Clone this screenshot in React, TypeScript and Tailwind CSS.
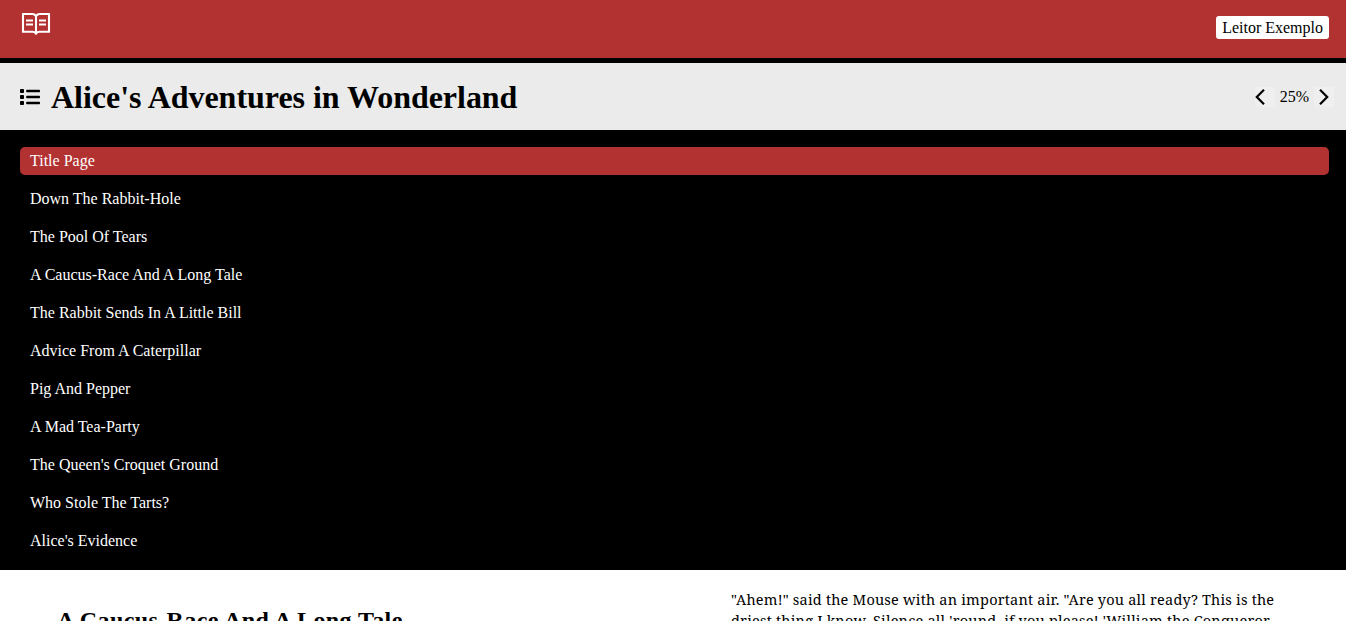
const chapters = [
  "Title Page",
  "Down The Rabbit-Hole",
  "The Pool Of Tears",
  "A Caucus-Race And A Long Tale",
  "The Rabbit Sends In A Little Bill",
  "Advice From A Caterpillar",
  "Pig And Pepper",
  "A Mad Tea-Party",
  "The Queen's Croquet Ground",
  "Who Stole The Tarts?",
  "Alice's Evidence",
];

function BookIcon() {
  return (
    <svg className="mt-3 h-6 w-8 text-white" viewBox="0 0 32 24" fill="none" stroke="currentColor">
      <path d="M3 2h9.500C14.500 2 16 4 16 4s1.500-2 3.500-2H29v17.800h-9.500C17.500 19.800 16 21.600 16 21.600s-1.500-1.800-3.500-1.800H3z" strokeWidth="2.100" />
      <path d="M16 4v17.500" strokeWidth="2.100" />
      <path d="M6 8.500h7M6 12.500h7M19 8.500h7M19 12.500h7" strokeWidth="2" />
    </svg>
  );
}

function ListIcon() {
  return (
    <svg className="h-5 w-5" viewBox="0 0 20 20">
      <rect x="0" y="2" width="4" height="4" rx="0.800" />
      <rect x="0" y="8" width="4" height="4" rx="0.800" />
      <rect x="0" y="14" width="4" height="4" rx="0.800" />
      <rect x="6.200" y="2.700" width="13.800" height="2.600" rx="0.700" />
      <rect x="6.200" y="8.700" width="13.800" height="2.600" rx="0.700" />
      <rect x="6.200" y="14.700" width="13.800" height="2.600" rx="0.700" />
    </svg>
  );
}

function Chevron({ d }: { d: string }) {
  return (
    <button className="h-5 w-5 bg-[#efefef]">
      <svg className="size-5" viewBox="0 0 20 20" fill="none" stroke="currentColor" strokeWidth="2.200">
        <path d={d} />
      </svg>
    </button>
  );
}

export default function App() {
  return (
    <div className="h-[621px] overflow-hidden bg-white font-['Liberation_Serif',serif] text-base text-black">
      <header className="flex h-[63px] justify-between border-b-[5px] border-black bg-[#b23131] pr-[17px] pl-5">
        <BookIcon />
        <div className="mt-4 h-[23px] rounded-[3px] bg-white px-1.5 leading-6">Leitor Exemplo</div>
      </header>
      <div className="flex h-[67px] items-center bg-[#ebebeb] pr-3 pl-5">
        <ListIcon />
        <h1 className="ml-[11px] flex-1 text-[32px] font-bold tracking-[-0.03px]">Alice's Adventures in Wonderland</h1>
        <Chevron d="M9 2.800 1.800 10 9 17.200" />
        <span className="mx-[5px]">25%</span>
        <Chevron d="M6 2.800 13.200 10 6 17.200" />
      </div>
      <nav className="flex h-[440px] flex-col gap-2.5 bg-black pt-[17px] pr-[17px] pl-5 text-white">
        {chapters.map((c, i) => (
          <a key={c} className={i === 0 ? "h-7 rounded-[5px] bg-[#b23131] px-2.5 leading-7" : "h-7 px-2.5 leading-7"}>
            {c}
          </a>
        ))}
      </nav>
      <main className="flex h-[51px] overflow-hidden">
        <h2 className="w-[674px] pt-[34px] pl-[57px] text-2xl font-bold tracking-[0.4px]">A Caucus-Race And A Long Tale</h2>
        <p className="w-[672px] pt-[19px] pl-[57px] font-['Noto_Serif','DejaVu_Serif',serif] text-[14.500px] leading-[21px] tracking-[0.21px] whitespace-nowrap">
          "Ahem!" said the Mouse with an important air. "Are you all ready? This is the
          <br />
          driest thing I know. Silence all 'round, if you please! 'William the Conqueror,
        </p>
      </main>
    </div>
  );
}
